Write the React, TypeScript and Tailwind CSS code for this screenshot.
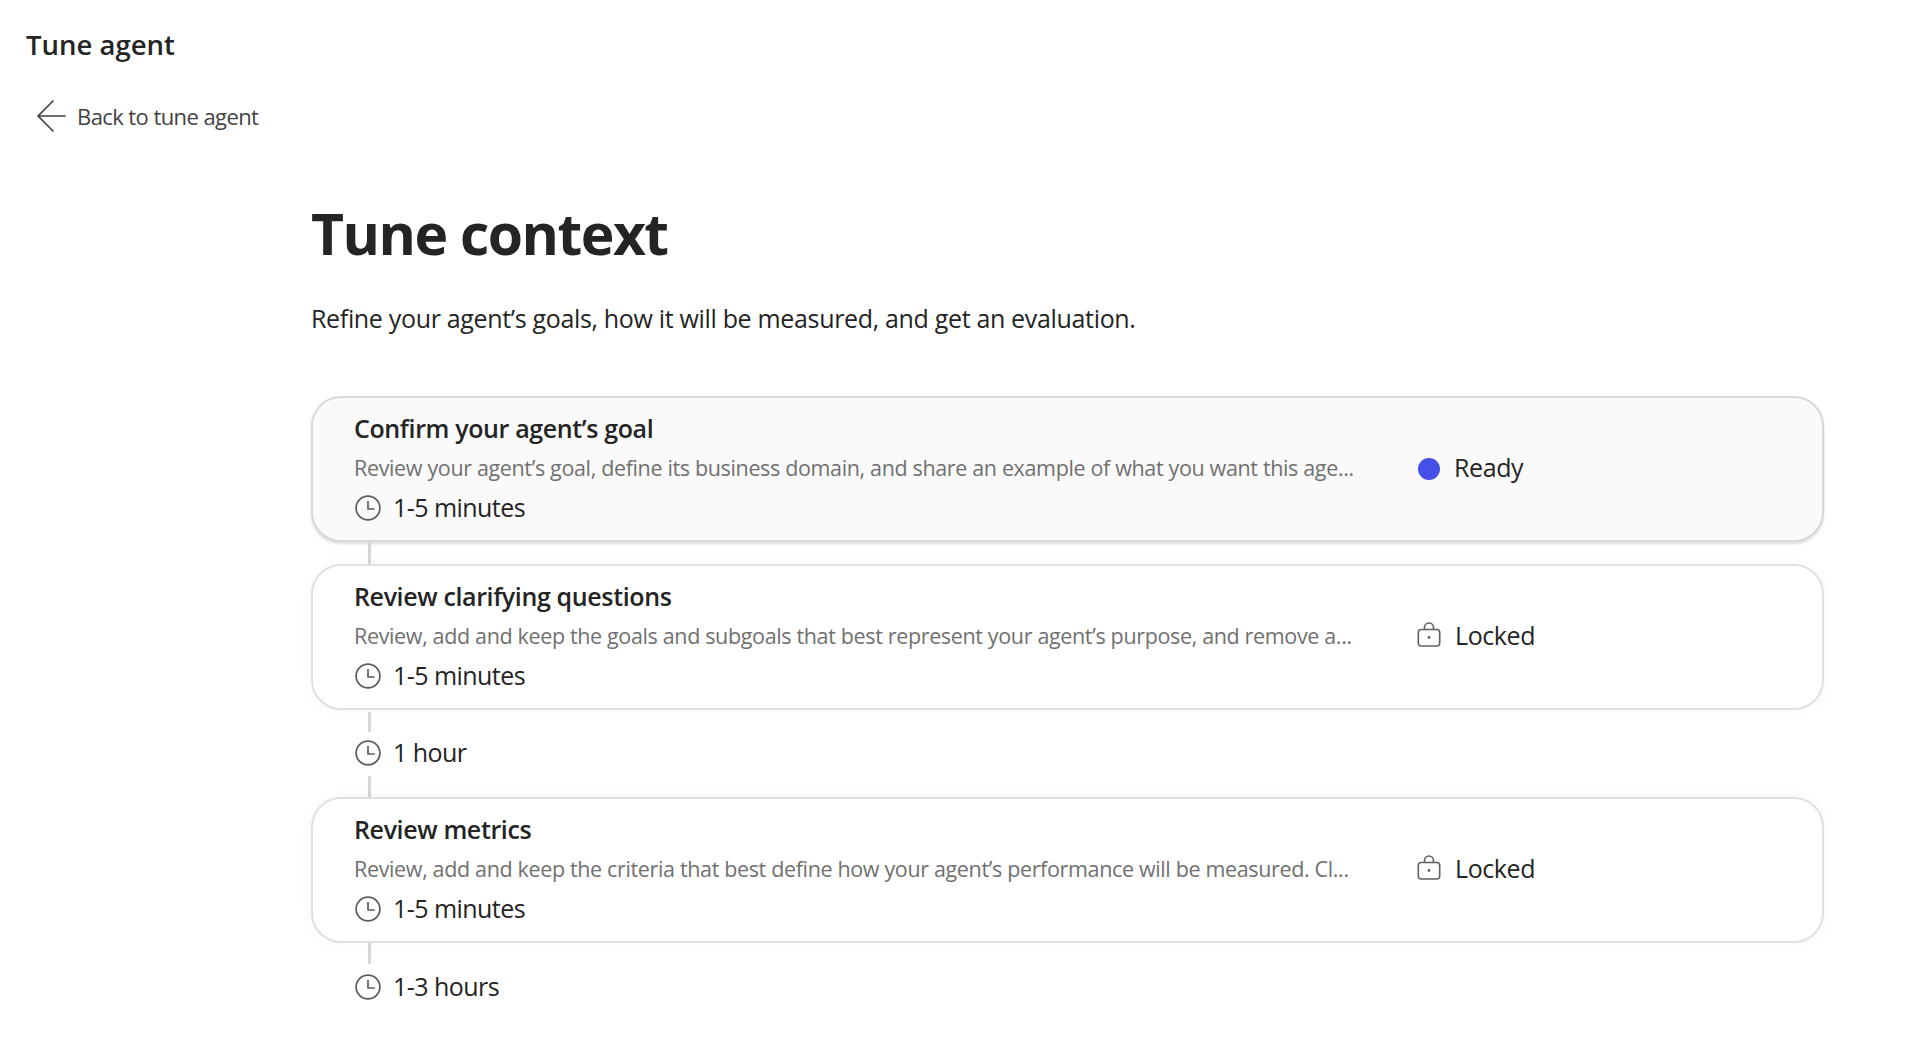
const font = "font-['Open_Sans',sans-serif]";

function BackArrow() {
  return (
    <svg viewBox="0 0 30 34" fill="none" className="w-[30px] h-[34px] shrink-0">
      <path d="M29 17H2M2 17L17 2M2 17L17 32" stroke="#424242" strokeWidth="1.7" strokeLinecap="round" strokeLinejoin="round" />
    </svg>
  );
}

function ClockIcon() {
  return (
    <svg viewBox="0 0 26 26" fill="none" className="w-[26px] h-[26px] shrink-0">
      <circle cx="13" cy="13" r="11.9" stroke="#5c5c5c" strokeWidth="1.7" />
      <path d="M13 6.5V14H19" stroke="#5c5c5c" strokeWidth="1.7" strokeLinecap="round" strokeLinejoin="round" />
    </svg>
  );
}

function LockIcon() {
  return (
    <svg viewBox="0 0 24 25" fill="none" className="w-[24px] h-[25px] shrink-0">
      <path d="M7.5 7.5V5.5a4.5 4.5 0 0 1 9 0V7.5" stroke="#616161" strokeWidth="1.6" />
      <rect x="1.3" y="7.5" width="21.4" height="16.5" rx="3" stroke="#616161" strokeWidth="1.6" />
      <circle cx="12" cy="15.5" r="1.4" fill="#616161" />
    </svg>
  );
}

function Connector({ className }: { className: string }) {
  return <div className={`w-[3px] ml-[57px] bg-[#d6d6d6] ${className}`} />;
}

function Duration({ label }: { label: string }) {
  return (
    <div className="flex items-center gap-[12px] h-[26px] text-[25px] leading-[26px] tracking-[-0.55px] text-[#242424]">
      <ClockIcon />
      <span className="pb-[3px]">{label}</span>
    </div>
  );
}

interface StepProps {
  title: string;
  description: string;
  status: "ready" | "locked";
}

function Step({ title, description, status }: StepProps) {
  const isReady = status === "ready";
  return (
    <div
      className={`flex items-center h-[146px] pl-[41px] border-2 rounded-[30px] ${
        isReady
          ? "bg-[#fafafa] border-[#d9d9d9] shadow-[0_2px_3px_rgba(0,0,0,0.14)]"
          : "bg-white border-[#e0e0e0] shadow-[0_0_14px_rgba(0,0,0,0.04)]"
      }`}
    >
      <div className="w-[1042px] flex flex-col">
        <div className="-mt-[4px] text-[25px] leading-[30px] tracking-[-0.37px] font-semibold text-[#242424]">{title}</div>
        <div className="mt-[10px] text-[21.5px] leading-[30px] tracking-[-0.35px] text-[#707070] whitespace-nowrap">{description}</div>
        <div className="mt-[12px] ml-[1px]">
          <Duration label="1-5 minutes" />
        </div>
      </div>
      <div className="-mt-[5px] ml-[21px] flex items-center gap-[14px] text-[25px] leading-[30px] tracking-[-0.4px] text-[#242424]">
        {isReady ? (
          <div className="w-[22px] h-[22px] ml-[1px] mt-[5px] rounded-full bg-[#4650e8]" />
        ) : (
          <LockIcon />
        )}
        <span>{isReady ? "Ready" : "Locked"}</span>
      </div>
    </div>
  );
}

export default function App() {
  return (
    <div className={`${font} min-h-[1039px] bg-white overflow-hidden`}>
      <div className="pt-[27px] pl-[26px] text-[27.5px] leading-[36px] font-semibold text-[#242424]">Tune agent</div>
      <div className="mt-[36px] pl-[36px] flex items-center gap-[11px] text-[22px] leading-[30px] tracking-[-0.58px] text-[#424242]">
        <BackArrow />
        <span>Back to tune agent</span>
      </div>

      <div className="ml-[311px] w-[1513px]">
        <h1 className="mt-[65px] text-[57px] leading-[70px] tracking-[-1.5px] font-bold text-[#242424]">Tune context</h1>
        <p className="mt-[33px] text-[25px] leading-[34px] tracking-[-0.33px] text-[#242424]">
          Refine your agent’s goals, how it will be measured, and get an evaluation.
        </p>

        <div className="mt-[61px] flex flex-col">
          <Step
            status="ready"
            title="Confirm your agent’s goal"
            description="Review your agent’s goal, define its business domain, and share an example of what you want this age..."
          />
          <Connector className="h-[22px]" />
          <Step
            status="locked"
            title="Review clarifying questions"
            description="Review, add and keep the goals and subgoals that best represent your agent’s purpose, and remove a..."
          />
          <Connector className="mt-[2px] h-[20px]" />
          <div className="pl-[44px] pt-[8px] pb-[10px]">
            <Duration label="1 hour" />
          </div>
          <Connector className="h-[21px]" />
          <Step
            status="locked"
            title="Review metrics"
            description="Review, add and keep the criteria that best define how your agent’s performance will be measured. Cl..."
          />
          <Connector className="h-[21px]" />
          <div className="pl-[44px] pt-[10px]">
            <Duration label="1-3 hours" />
          </div>
        </div>
      </div>
    </div>
  );
}
